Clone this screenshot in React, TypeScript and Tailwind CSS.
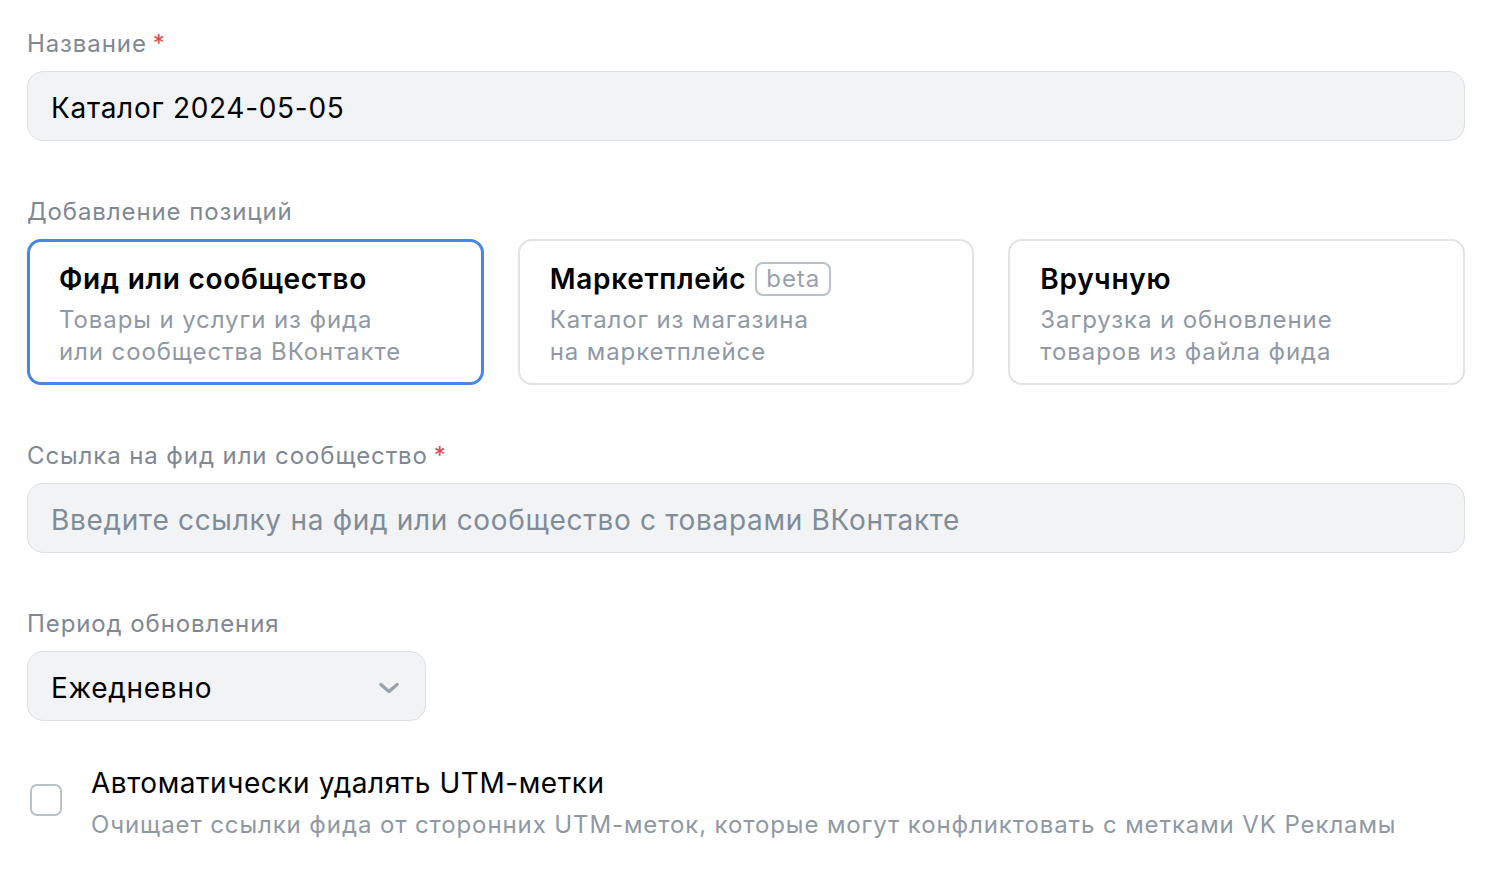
import React, {useState} from 'react';

const font = {fontFamily: 'Inter, "Noto Sans", sans-serif'};

const Label: React.FC<{text: string; required?: boolean}> = ({text, required}) => (
    <div className="text-[24px] leading-[32px] tracking-[0.9px] text-[#7f8893]">
        {text}
        {required && <span className="ml-[6px] text-[#e64646]">*</span>}
    </div>
);

const options = [
    {title: 'Фид или сообщество', text: ['Товары и услуги из фида', 'или сообщества ВКонтакте']},
    {title: 'Маркетплейс', beta: true, text: ['Каталог из магазина', 'на маркетплейсе']},
    {title: 'Вручную', text: ['Загрузка и обновление', 'товаров из файла фида']}
];

const App: React.FC = () => {
    const [selected, setSelected] = useState(0);
    const [checked, setChecked] = useState(false);

    return (
        <div className="min-h-screen bg-white pl-[27px] pr-[31px] pt-[28px]" style={font}>
            <Label text="Название" required/>
            <div className="mt-[11px] h-[70px] rounded-[16px] border border-[#dcdfe3] bg-[#f2f3f5] px-[23px] pt-[3px] flex items-center text-[28px] tracking-[0.7px] text-black">
                Каталог 2024-05-05
            </div>

            <div className="mt-[55px]">
                <Label text="Добавление позиций"/>
            </div>
            <div className="mt-[11px] grid grid-cols-3 gap-[34px]">
                {options.map((o, i) => (
                    <div
                        key={o.title}
                        onClick={() => setSelected(i)}
                        className={
                            i === selected
                                ? 'h-[146px] rounded-[14px] border-[3px] border-[#4a87e3] bg-white pl-[29px] pt-[19px] flex flex-col cursor-pointer'
                                : 'h-[146px] rounded-[14px] border-2 border-[#e1e3e6] bg-white pl-[30px] pt-[20px] flex flex-col cursor-pointer'
                        }
                    >
                        <div className="flex items-center h-[36px]">
                            <span className="text-[28px] leading-[36px] font-semibold tracking-[0.7px] text-black">{o.title}</span>
                            {o.beta && (
                                <span className="ml-[9px] h-[34px] px-[9px] rounded-[8px] border-2 border-[#b9c1cb] text-[24px] leading-[28px] tracking-[0.9px] text-[#99a2ad] flex items-center">
                                    beta
                                </span>
                            )}
                        </div>
                        <div className="mt-[7px] text-[24px] leading-[32px] tracking-[0.9px] text-[#8f99a5]">
                            {o.text.map(t => <div key={t}>{t}</div>)}
                        </div>
                    </div>
                ))}
            </div>

            <div className="mt-[55px]">
                <Label text="Ссылка на фид или сообщество" required/>
            </div>
            <div className="mt-[11px] h-[70px] rounded-[16px] border border-[#dcdfe3] bg-[#f2f3f5] px-[23px] pt-[3px] flex items-center text-[28px] tracking-[0.7px] text-[#818c99]">
                Введите ссылку на фид или сообщество с товарами ВКонтакте
            </div>

            <div className="mt-[55px]">
                <Label text="Период обновления"/>
            </div>
            <div className="mt-[11px] w-[399px] h-[70px] rounded-[16px] border border-[#dcdfe3] bg-[#f2f3f5] pl-[23px] pr-[22px] pt-[3px] flex items-center justify-between text-[28px] tracking-[0.7px] text-black">
                <span>Ежедневно</span>
                <svg width="28" height="28" viewBox="0 0 24 24" fill="none">
                    <path d="M5 9l7 6 7-6" stroke="#99a2ad" strokeWidth="2.8" strokeLinecap="round" strokeLinejoin="round"/>
                </svg>
            </div>

            <div className="mt-[44px] flex items-start">
                <button
                    onClick={() => setChecked(!checked)}
                    className={
                        checked
                            ? 'mt-[19px] ml-[3px] w-[32px] h-[32px] rounded-[7px] border-2 border-[#4a87e3] bg-[#4a87e3] shrink-0'
                            : 'mt-[19px] ml-[3px] w-[32px] h-[32px] rounded-[7px] border-2 border-[#b9c1cb] bg-white shrink-0'
                    }
                />
                <div className="ml-[29px]">
                    <div className="text-[28px] leading-[36px] tracking-[0.55px] text-black">Автоматически удалять UTM-метки</div>
                    <div className="mt-[8px] text-[24px] leading-[32px] tracking-[0.9px] text-[#8f99a5]">
                        Очищает ссылки фида от сторонних UTM-меток, которые могут конфликтовать с метками VK Рекламы
                    </div>
                </div>
            </div>
        </div>
    );
};

export default App;
